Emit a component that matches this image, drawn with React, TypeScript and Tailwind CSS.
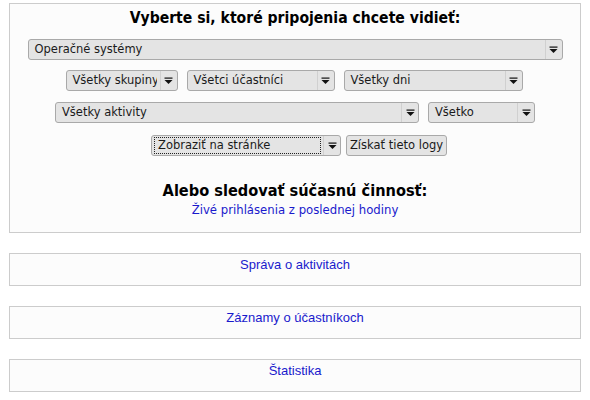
import React from "react";

const Arrow = () => (
  <svg width="9" height="8" viewBox="0 0 9 8">
    <rect x="0.5" y="0.5" width="8" height="1.2" fill="#111" />
    <path d="M0.5 3 L8.5 3 L4.5 7 Z" fill="#111" />
  </svg>
);

function Sel({ label, w, focus }: { label: string; w: string; focus?: boolean }) {
  return (
    <div
      className={`${w} h-[21px] flex items-stretch border border-[#a9a9a9] rounded-[3px] bg-[#e4e4e4] text-[11.5px] text-[#1a1a1a] shrink-0`}
    >
      <div className="flex-1 flex items-center pl-[2px] pr-[2px] min-w-0">
        <div
          className={`flex-1 h-[17px] flex items-center pl-[3px] leading-none whitespace-nowrap overflow-hidden ${
            focus ? "border border-dotted border-[#222]" : "border border-transparent"
          }`}
        >
          {label}
        </div>
      </div>
      <div className="w-[17px] flex items-center justify-center border-l border-[#d0d0d0]">
        <Arrow />
      </div>
    </div>
  );
}

function LinkBox({ text }: { text: string }) {
  return (
    <div
      className="mx-[9px] h-[33px] border border-[#cccccc] bg-[#fcfcfc] text-center pt-[3px] text-[13px] leading-[16px]"
      style={{ fontFamily: '"Liberation Sans", Arial, sans-serif' }}
    >
      <a href="#" className="text-[#1a1acc]">
        {text}
      </a>
    </div>
  );
}

const condensed = { fontFamily: '"DejaVu Sans Condensed", "DejaVu Sans", sans-serif' };

export default function App() {
  return (
    <div
      className="w-[590px] h-[400px] bg-white overflow-hidden pt-[3px]"
      style={{ fontFamily: '"DejaVu Sans", Verdana, sans-serif' }}
    >
      <div className="mx-[9px] h-[230px] border border-[#cccccc] bg-[#fcfcfc] flex flex-col items-center">
        <div className="mt-[5px] text-[15.6px] leading-[19px] font-bold text-black" style={condensed}>
          Vyberte si, ktoré pripojenia chcete vidieť:
        </div>
        <div className="mt-[11px] flex justify-center w-full">
          <Sel label="Operačné systémy" w="w-[535px]" />
        </div>
        <div className="mt-[10px] flex justify-center gap-[9px] w-full pr-[2px]">
          <Sel label="Všetky skupiny" w="w-[112px]" />
          <Sel label="Všetci účastníci" w="w-[148px]" />
          <Sel label="Všetky dni" w="w-[179px]" />
        </div>
        <div className="mt-[11px] flex justify-center gap-[9px] w-full">
          <Sel label="Všetky aktivity" w="w-[364px]" />
          <Sel label="Všetko" w="w-[107px]" />
        </div>
        <div className="mt-[12px] flex justify-center items-start gap-[5px] w-full pl-[8px]">
          <Sel label="Zobraziť na stránke" w="w-[190px]" focus />
          <button className="h-[21px] w-[101px] border border-[#a9a9a9] rounded-[3px] bg-[#e4e4e4] text-[11.5px] leading-none text-[#1a1a1a] whitespace-nowrap">
            Získať tieto logy
          </button>
        </div>
        <div className="mt-[25px] text-[16.2px] leading-[19px] font-bold text-black" style={condensed}>
          Alebo sledovať súčasnú činnosť:
        </div>
        <a href="#" className="mt-[3px] text-[11.7px] leading-[15px] text-[#1a1acc]">
          Živé prihlásenia z poslednej hodiny
        </a>
      </div>
      <div className="mt-[20px]">
        <LinkBox text="Správa o aktivitách" />
      </div>
      <div className="mt-[20px]">
        <LinkBox text="Záznamy o účastníkoch" />
      </div>
      <div className="mt-[20px]">
        <LinkBox text="Štatistika" />
      </div>
    </div>
  );
}
